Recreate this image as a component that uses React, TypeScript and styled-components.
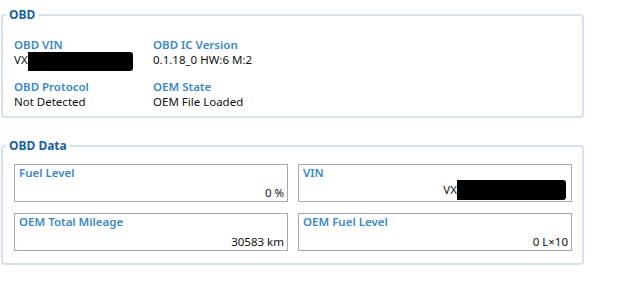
import styled, { createGlobalStyle } from "styled-components";

const GlobalStyle = createGlobalStyle`
  body {
    margin: 0;
    background: #ffffff;
    font-family: "Noto Sans", "Open Sans", sans-serif;
    font-size: 11.5px;
    color: #111;
  }
`;

const Page = styled.div`
  width: 583px;
  padding: 7px 0 0 1px;
  display: flex;
  flex-direction: column;
  gap: 20px;
`;

const Group = styled.fieldset<{ $pad: string }>`
  margin: 0;
  border: 2px solid #d9e2ea;
  border-radius: 4px;
  padding: ${({ $pad }) => $pad};
  min-width: 0;
`;

const Legend = styled.legend`
  margin-left: -8px;
  padding: 0 3px;
  font-weight: 700;
  font-size: 12px;
  line-height: 16px;
  color: #1b5e9f;
`;

const InfoGrid = styled.div`
  display: grid;
  grid-template-columns: 139px 1fr;
  row-gap: 8px;
`;

const Info = styled.div`
  display: flex;
  flex-direction: column;
`;

const Label = styled.div`
  font-weight: 600;
  line-height: 15px;
  color: #3a87c6;
  white-space: nowrap;
`;

const Value = styled.div`
  line-height: 15px;
  white-space: nowrap;
`;

const CellGrid = styled.div`
  display: grid;
  grid-template-columns: 1fr 1fr;
  column-gap: 10px;
  row-gap: 11px;
`;

const Cell = styled.div`
  height: 38px;
  box-sizing: border-box;
  border: 1px solid #a9a9a9;
  padding: 0 3px 1px 4px;
  display: flex;
  flex-direction: column;
  justify-content: space-between;
`;

const CellValue = styled(Value)`
  text-align: right;
`;

const Redacted = styled.span<{ $w: number; $h: number; $drop: number; $right?: number }>`
  display: inline-block;
  width: ${({ $w }) => $w}px;
  height: ${({ $h }) => $h}px;
  margin-right: ${({ $right }) => $right ?? 0}px;
  background: #000;
  vertical-align: ${({ $drop }) => -$drop}px;
  border-radius: 0 3px 3px 0;
`;

const info = [
  { label: "OBD VIN", value: "VX", redact: true },
  { label: "OBD IC Version", value: "0.1.18_0 HW:6 M:2" },
  { label: "OBD Protocol", value: "Not Detected" },
  { label: "OEM State", value: "OEM File Loaded" },
];

const cells = [
  { label: "Fuel Level", value: "0 %" },
  { label: "VIN", value: "VX", redact: true },
  { label: "OEM Total Mileage", value: "30583 km" },
  { label: "OEM Fuel Level", value: "0 L×10" },
];

export default function App() {
  return (
    <>
      <GlobalStyle />
      <Page>
        <Group $pad="14px 12px 7px 11px">
          <Legend>OBD</Legend>
          <InfoGrid>
            {info.map((i) => (
              <Info key={i.label}>
                <Label>{i.label}</Label>
                <Value>
                  {i.value}
                  {i.redact && <Redacted $w={105} $h={19} $drop={7} />}
                </Value>
              </Info>
            ))}
          </InfoGrid>
        </Group>
        <Group $pad="10px 10px 12px 11px">
          <Legend>OBD Data</Legend>
          <CellGrid>
            {cells.map((c) => (
              <Cell key={c.label}>
                <Label>{c.label}</Label>
                <CellValue>
                  {c.value}
                  {c.redact && <Redacted $w={109} $h={20} $drop={6} $right={2} />}
                </CellValue>
              </Cell>
            ))}
          </CellGrid>
        </Group>
      </Page>
    </>
  );
}
